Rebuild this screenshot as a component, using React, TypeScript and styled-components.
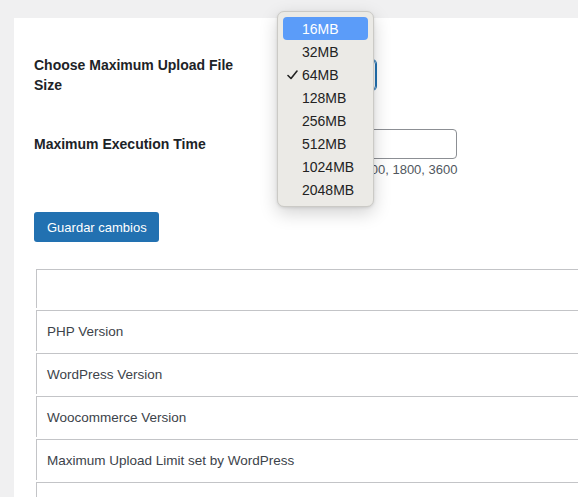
import styled, { createGlobalStyle } from "styled-components";

const GlobalStyle = createGlobalStyle`
  html, body {
    margin: 0;
    padding: 0;
    background: #f0f0f1;
    font-family: "Liberation Sans", Arial, sans-serif;
    overflow: hidden;
  }
`;

const Page = styled.div`
  padding: 18px 0 0 14px;
  height: 497px;
  box-sizing: border-box;
  overflow: hidden;
`;

const Panel = styled.div`
  position: relative;
  background: #fff;
  height: 100%;
  padding: 37px 0 0 20px;
  box-sizing: border-box;
`;

const FieldRow = styled.div<{ $gap: number }>`
  display: grid;
  grid-template-columns: 200px 1fr;
  column-gap: 50px;
  margin-bottom: ${p => p.$gap}px;
`;

const Label = styled.div<{ $top?: number }>`
  font-size: 14px;
  font-weight: 700;
  line-height: 20px;
  color: #1d2327;
  padding-top: ${p => p.$top ?? 0}px;
`;

const Field = styled.div`
  display: flex;
  flex-direction: column;
  width: 173px;
`;

const Select = styled.div`
  margin-top: 5px;
  width: 92px;
  height: 30px;
  box-sizing: border-box;
  border: 1px solid #2271b1;
  border-radius: 4px;
  box-shadow: 0 0 0 1px #2271b1;
`;

const Input = styled.div`
  height: 30px;
  box-sizing: border-box;
  border: 1px solid #8c8f94;
  border-radius: 4px;
`;

const Description = styled.div`
  margin-top: 2px;
  margin-bottom: 2px;
  font-size: 13px;
  line-height: 18px;
  color: #50575e;
  white-space: nowrap;
`;

const Button = styled.button`
  display: block;
  height: 30px;
  padding: 0 12px 0 13px;
  border: 0;
  border-radius: 3px;
  background: #2271b1;
  color: #fff;
  font-family: inherit;
  font-size: 13px;
  font-weight: 500;
`;

const Table = styled.div`
  margin: 27px 0 0 2px;
`;

const TableRow = styled.div<{ $h: number }>`
  height: ${p => p.$h}px;
  box-sizing: border-box;
  border-top: 1px solid #c3c4c7;
`;

const Cell = styled.div`
  height: calc(100% - 2px);
  border-left: 1px solid #c3c4c7;
  display: flex;
  align-items: center;
  padding-left: 10px;
  font-size: 13.5px;
  color: #3c434a;
`;

const Popup = styled.div`
  position: absolute;
  left: 263px;
  top: -7px;
  width: 97px;
  padding: 5px;
  box-sizing: border-box;
  background: #ebeae6;
  border: 1px solid #cbcac6;
  border-radius: 7px;
  box-shadow: 0 6px 18px rgba(0, 0, 0, 0.18), 0 1px 3px rgba(0, 0, 0, 0.1);
`;

const Option = styled.div<{ $active?: boolean }>`
  position: relative;
  height: 23px;
  line-height: 24px;
  padding-left: 19px;
  border-radius: 4px;
  font-size: 14px;
  color: ${p => (p.$active ? "#fff" : "#222")};
  background: ${p => (p.$active ? "#5b9cf9" : "transparent")};
`;

const Check = styled.svg`
  position: absolute;
  left: 4px;
  top: 7px;
`;

const sizes = ["16MB", "32MB", "64MB", "128MB", "256MB", "512MB", "1024MB", "2048MB"];

const rows = [
  { label: "", h: 41 },
  { label: "PHP Version", h: 43 },
  { label: "WordPress Version", h: 43 },
  { label: "Woocommerce Version", h: 43 },
  { label: "Maximum Upload Limit set by WordPress", h: 43 },
  { label: "", h: 43 },
];

export default function App() {
  return (
    <Page>
      <GlobalStyle />
      <Panel>
        <FieldRow $gap={34}>
          <Label>Choose Maximum Upload File Size</Label>
          <Field>
            <Select />
          </Field>
        </FieldRow>
        <FieldRow $gap={31}>
          <Label $top={5}>Maximum Execution Time</Label>
          <Field>
            <Input />
            <Description>60, 300, 600, 900, 1800, 3600</Description>
          </Field>
        </FieldRow>
        <Button>Guardar cambios</Button>
        <Table>
          {rows.map((r, i) => (
            <TableRow key={i} $h={r.h}>
              <Cell>{r.label}</Cell>
            </TableRow>
          ))}
        </Table>
        <Popup>
          {sizes.map(s => (
            <Option key={s} $active={s === "16MB"}>
              {s === "64MB" && (
                <Check width="11" height="10" viewBox="0 0 11 10">
                  <path d="M1 5.5 L4 8.5 L10 1" fill="none" stroke="#222" strokeWidth="1.6" strokeLinecap="round" strokeLinejoin="round" />
                </Check>
              )}
              {s}
            </Option>
          ))}
        </Popup>
      </Panel>
    </Page>
  );
}
